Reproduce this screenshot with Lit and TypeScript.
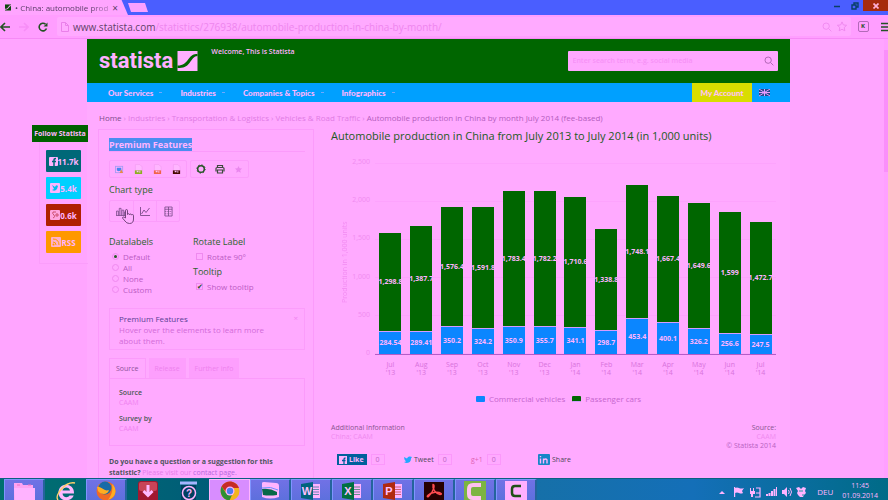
import { LitElement, html, svg, css } from "lit";
import { customElement } from "lit/decorators.js";
import { classMap } from "lit/directives/class-map.js";
import { styleMap } from "lit/directives/style-map.js";

interface Month {
  name: string;
  year: string;
  cars: number;
  commercial: number;
}

const MONTHS: Month[] = [
  { name: "Jul", year: "'13", cars: 1298.8, commercial: 284.54 },
  { name: "Aug", year: "'13", cars: 1387.7, commercial: 289.41 },
  { name: "Sep", year: "'13", cars: 1576.4, commercial: 350.2 },
  { name: "Oct", year: "'13", cars: 1591.8, commercial: 324.2 },
  { name: "Nov", year: "'13", cars: 1783.4, commercial: 350.9 },
  { name: "Dec", year: "'13", cars: 1782.2, commercial: 355.7 },
  { name: "Jan", year: "'14", cars: 1710.6, commercial: 341.1 },
  { name: "Feb", year: "'14", cars: 1338.8, commercial: 298.7 },
  { name: "Mar", year: "'14", cars: 1748.1, commercial: 453.4 },
  { name: "Apr", year: "'14", cars: 1667.4, commercial: 400.1 },
  { name: "May", year: "'14", cars: 1649.6, commercial: 326.2 },
  { name: "Jun", year: "'14", cars: 1599, commercial: 256.6 },
  { name: "Jul", year: "'14", cars: 1472.7, commercial: 247.5 },
];
const AXIS = ["2,500", "2,000", "1,500", "1,000", "500", "0"];
const AXIS_MAX = 2500;

const swoosh = (fg: string, bg: string) => svg`
  <rect width="20" height="20" fill=${fg}></rect>
  <path d="M0 14.500C6 14.500 8 12 11 8S16 3 20 3V5C16.500 5 15 8 12 12S6 17 0 17Z" fill=${bg}></path>`;

const magnifier = html`<svg viewBox="0 0 12 12" width="10" height="10" fill="none" stroke="currentColor">
  <circle cx="5" cy="5" r="3.800"></circle><path d="M8 8L11.200 11.200"></path></svg>`;

@customElement("statista-chart")
export class StatistaChart extends LitElement {
  static styles = css`
    :host { display: block; }
    .title { margin: 0; font-size: 11px; line-height: 14px; font-weight: 400; color: #1d5a1d; white-space: nowrap; }
    .frame { display: grid; grid-template-columns: 20px 24px 1fr; margin-top: 14px; }
    .ytitle { writing-mode: vertical-rl; transform: rotate(180deg); font-size: 7px; line-height: 12px;
      color: #f28bf2; text-align: center; height: 191px; white-space: nowrap; align-self: end; justify-self: end; }
    .yaxis { display: flex; flex-direction: column; justify-content: space-between; height: 201px;
      font-size: 7px; line-height: 10px; color: #f08cf0; text-align: right; padding-right: 5px; }
    .plot { display: flex; height: 191px; margin-top: 6px; border-bottom: 1px solid #b45cc8;
      background: repeating-linear-gradient(to bottom, #fda3fd 0 1px, transparent 1px 38px); }
    .col { flex: 1; min-width: 0; display: flex; flex-direction: column; justify-content: flex-end; align-items: center; }
    .seg { width: 22px; display: flex; align-items: center; justify-content: center; overflow: hidden;
      font-size: 7px; line-height: 8px; font-weight: 700; color: #ffb4ff; }
    .cars { background: #006600; border-bottom: 1px solid #d59cff; box-sizing: border-box; }
    .com { background: #0b86ff; }
    .months { grid-column: 3; display: flex; padding-top: 3px; font-size: 7px; line-height: 8px; color: #d873dc; text-align: center; }
    .months span { flex: 1; }
    .legend { display: flex; justify-content: center; gap: 7px; margin: 16px 0 0 10px; font-size: 8px; line-height: 12px; color: #c566cd; }
    .legend span { display: flex; align-items: center; gap: 4px; }
    .legend i { width: 9px; height: 6px; border-radius: 1px; }
  `;

  private height(value: number) {
    return styleMap({ height: `${Math.round((value / AXIS_MAX) * 191)}px` });
  }

  render() {
    return html`
      <h1 class="title">Automobile production in China from July 2013 to July 2014 (in 1,000 units)</h1>
      <div class="frame">
        <div class="ytitle">Production in 1,000 units</div>
        <div class="yaxis">${AXIS.map((a) => html`<span>${a}</span>`)}</div>
        <div class="plot">
          ${MONTHS.map(
            (m) => html`<div class="col">
              <div class="seg cars" style=${this.height(m.cars)}>${m.cars.toLocaleString("en-US")}</div>
              <div class="seg com" style=${this.height(m.commercial)}>${m.commercial}</div>
            </div>`
          )}
        </div>
        <div class="months">${MONTHS.map((m) => html`<span>${m.name}<br />${m.year}</span>`)}</div>
      </div>
      <div class="legend">
        <span><i class="com"></i>Commercial vehicles</span>
        <span><i class="cars"></i>Passenger cars</span>
      </div>
    `;
  }
}

@customElement("feature-panel")
export class FeaturePanel extends LitElement {
  static styles = css`
    :host { display: block; box-sizing: border-box; border: 1px solid #fb9bfb; padding: 9px 8px 0 10px; color: #f084f0; font-size: 8px; line-height: 11px; }
    h2 { margin: 0; font-size: 9px; line-height: 12px; border-bottom: 1px solid #fb9bfb; }
    h2 span { background: #4a8df0; color: #ffb4ff; }
    h3 { margin: 0; font-size: 9px; line-height: 12px; font-weight: 500; color: #2d642d; }
    button { font: inherit; color: inherit; background: none; border: 0; padding: 0; display: flex; align-items: center; justify-content: center; }
    .tools { display: flex; gap: 3px; margin: 8px 0 6px; }
    .group { display: flex; border: 1px solid #fb9dfb; border-radius: 2px; }
    .group button { width: 19px; height: 16px; }
    .types { display: inline-flex; margin: 4px 0 14px; position: relative; }
    .types button { width: 23px; height: 20px; color: #69407a; }
    .types button + button { border-left: 1px solid #fb9dfb; }
    .hand { position: absolute; left: 12px; top: 8px; }
    .options { display: grid; grid-template-columns: 84px 1fr; color: #bb5cc4; }
    .options h3 { margin-bottom: 3px; }
    .options label { display: flex; align-items: center; gap: 4px; height: 11px; white-space: nowrap; }
    .options input { appearance: none; box-sizing: border-box; width: 7px; height: 7px; margin: 0 0 0 3px; border: 1px solid #ef8aef; display: grid; place-items: center; }
    .options input[type="radio"] { border-radius: 50%; }
    .options input[type="radio"]:checked::before { content: ""; width: 3px; height: 3px; border-radius: 50%; background: #245a24; }
    .options input[type="checkbox"]:checked::before { content: "✔"; font: 7px/7px "DejaVu Sans", sans-serif; color: #1d4d1d; }
    .second h3 + label + h3 { margin-top: 4px; }
    .hint { display: flex; justify-content: space-between; border: 1px solid #fb9dfb; margin-top: 13px; padding: 4px 6px 3px 9px; }
    .hint p { margin: 0; color: #d26cd8; }
    .hint h4 { margin: 0; font-size: 8px; font-weight: 500; line-height: 11px; color: #5a3f94; }
    .hint button { height: 8px; }
    .tabs { display: flex; gap: 3px; margin-top: 8px; }
    .tabs button { height: 20px; padding: 0 6px; background: #fd9ffd; color: #ee82ee; font-size: 7px; }
    .tabs .on { background: none; color: #8e5299; border: 1px solid #fb9bfb; border-bottom: 0; }
    .sheet { border: 1px solid #fb9bfb; padding: 9px 9px 5px; }
    .sheet dl { margin: 0; }
    .sheet dt { color: #4c5a55; line-height: 10px; font-weight: 600; font-size: 7px; }
    .sheet dd { margin: 0 0 6px; line-height: 10px; font-size: 7px; }
    .ask { margin: 10px 0 0; line-height: 11px; font-size: 7px; font-weight: 700; color: #4f5560; padding-right: 20px; }
    .ask span, .ask a { font-weight: 400; color: #e57ce8; text-decoration: none; }
    .ask a { color: #b568dc; }
  `;

  private file(color: string) {
    return html`<svg viewBox="0 0 10 12" width="9" height="11">
      <path d="M1.500 .5H6.500L9 3V8H1.500Z" fill="#ffb6ff" stroke="#ee98ee" stroke-width=".6"></path>
      <rect x="1" y="7" width="8" height="4" fill=${color}></rect><path d="M3 7.500h2v1.500h-2zM6 7.500h1v2h-1z" fill="#ffc0ff"></path></svg>`;
  }

  render() {
    return html`
      <h2><span>Premium Features</span></h2>
      <div class="tools">
        <div class="group">
          <button aria-label="Image"><svg viewBox="0 0 10 10" width="9" height="9">
            <rect x=".5" y="1.500" width="8" height="7" fill="#ffb0ff" stroke="#a89cf4"></rect><path d="M2 3h5v3l-3 1-2-1z" fill="#4a86f0"></path><path d="M5 9l2-4 2 4z" fill="#e88a45"></path></svg></button>
          <button aria-label="Spreadsheet">${this.file("#8caf20")}</button>
          <button aria-label="Presentation">${this.file("#f06448")}</button>
          <button aria-label="Document">${this.file("#480800")}</button>
        </div>
        <div class="group">
          <button aria-label="Settings"><svg viewBox="0 0 10 10" width="10" height="10" fill="none" stroke="#245424">
            <circle cx="5" cy="5" r="3.300" stroke-width="1.500"></circle><circle cx="5" cy="5" r="4.200" stroke-dasharray="1.200 2.100"></circle></svg></button>
          <button aria-label="Print"><svg viewBox="0 0 10 10" width="10" height="10" fill="none" stroke="#3d493d">
            <path d="M2.500 3.500V1.500h5v2M1 7.500V4.500q0-1 1-1h6q1 0 1 1v3M2.500 6h5v3h-5z" stroke-width="1.200"></path></svg></button>
          <button aria-label="Favourite"><svg viewBox="0 0 10 10" width="9" height="9">
            <path d="M5 1l1.200 2.700 2.800.3-2.100 1.900.6 2.800L5 7.300 2.500 8.700l.6-2.800L1 4l2.800-.3z" fill="#ea88ee"></path></svg></button>
        </div>
      </div>
      <h3>Chart type</h3>
      <div class="group types">
        <button aria-label="Columns"><svg viewBox="0 0 12 10" width="11" height="9" fill="none" stroke="currentColor" stroke-width=".8">
          <path d="M.5 9.500V4.500h2v5M3.500 9.500v-8h2v8M6.500 9.500v-6h2v6M9.500 9.500v-4h2v4M0 9.500h12"></path></svg></button>
        <button aria-label="Lines"><svg viewBox="0 0 10 10" width="10" height="10" fill="none" stroke="currentColor" stroke-width=".8">
          <path d="M.5 1V9.500H10M1.500 8L4 4 6 6.500 9.500 2"></path></svg></button>
        <button aria-label="Table"><svg viewBox="0 0 10 12" width="9" height="11" fill="none" stroke="currentColor" stroke-width=".8">
          <path d="M1 1h8v10H1zM1 3.500h8M5 1v10"></path><path d="M1 6h8M1 8.500h8" stroke-dasharray="1 1"></path></svg></button>
        <svg class="hand" viewBox="0 0 12 15" width="12" height="15">
          <path d="M3.500 9V1.800q0-1.300 1-1.300t1 1.300V5.500q.2-.8 1-.8t1 1q.2-.7 1-.7t.9 1q.3-.5 1-.5 1.100 0 1.100 1.300V10q0 4.500-4 4.500-3 0-4.500-2.500L.6 9.200q-.3-1 .5-1.200t2.400 1z" fill="#ffadff" stroke="#663b70" stroke-width=".9"></path></svg>
      </div>
      <div class="options">
        <div>
          <h3>Datalabels</h3>
          ${["Default", "All", "None", "Custom"].map(
            (o, i) => html`<label><input type="radio" name="labels" ?checked=${i === 0} />${o}</label>`
          )}
        </div>
        <div class="second">
          <h3>Rotate Label</h3>
          <label><input type="checkbox" />Rotate 90°</label>
          <h3>Tooltip</h3>
          <label><input type="checkbox" checked />Show tooltip</label>
        </div>
      </div>
      <div class="hint">
        <div>
          <h4>Premium Features</h4>
          <p>Hover over the elements to learn more<br />about them.</p>
        </div>
        <button aria-label="Close">×</button>
      </div>
      <div class="tabs">
        <button class="on">Source</button><button>Release</button><button>Further info</button>
      </div>
      <div class="sheet">
        <dl><dt>Source</dt><dd>CAAM</dd><dt>Survey by</dt><dd>CAAM</dd></dl>
      </div>
      <p class="ask">Do you have a question or a suggestion for this statistic? <span>Please visit our</span> <a href="#contact">contact page.</a></p>
    `;
  }
}

@customElement("task-bar")
export class TaskBar extends LitElement {
  static styles = css`
    :host { display: flex; height: 22px; box-sizing: border-box; border-top: 1px solid #0a6080; overflow: hidden; color: #ffb4ff;
      background: linear-gradient(to right, #007070, #005b78 25%, #1670a8 60%, #146fb8 78%, #006b87); }
    .apps { display: flex; flex: 1; padding-left: 4px; }
    button { width: 41px; height: 24px; border: 0; padding: 0; background: none; display: flex; align-items: center; justify-content: center; }
    button.open { background: linear-gradient(#7171e6, #5b70dc); border: 1px solid #7f94ff; border-right: 2px solid #24649c; }
    button.active { background: #d88dff; border: 1px solid #ffb4ff; }
    .tray { display: flex; align-items: center; gap: 5px; height: 25px; padding-right: 10px; }
    .lang { margin: 0 4px 0 5px; font-size: 8px; }
    .clock { align-self: flex-start; font-size: 7px; line-height: 10px; text-align: center; padding-top: 2px; }
  `;

  private office(letter: string, color: string) {
    return html`<svg viewBox="0 0 20 20" width="20" height="20">
      <rect x="9" y="3" width="10" height="14" fill="#ffb4ff"></rect>
      <path d="M12 6h6M12 8.500h6M12 11h6M12 13.500h6" stroke=${color} stroke-width=".6"></path>
      <path d="M0 3L12 1V19L0 17Z" fill=${color}></path>
      <text x="6" y="14" text-anchor="middle" font-size="11" font-weight="700" fill="#ffc0ff">${letter}</text></svg>`;
  }

  private icon(body: unknown) {
    return html`<svg viewBox="0 0 22 22" width="22" height="22">${body}</svg>`;
  }

  render() {
    const apps: [string, string, unknown][] = [
      ["Files", "open", this.icon(svg`<path d="M1 3h8l1 2h10v17H1z" fill="#ffa3f2"></path><path d="M1 8h21v14H2z" fill="#ffb3ff"></path><path d="M4 5h3M15 5h3" stroke="#ee6fbe"></path>`)],
      ["Internet Explorer", "", this.icon(svg`<path d="M19 13.500H7.500C8 18 13 18 14.500 15.500H18.700C16 22.500 3.500 22 3.500 12.500 3.500 2 19.500 2 19 13.500zM7.500 10.500H15C14.500 6.500 8 6.500 7.500 10.500z" fill="#ffb9ff"></path><path d="M3 20C-1 15 11 1 20 3" fill="none" stroke="#ffd06a" stroke-width="1.500"></path>`)],
      ["Firefox", "open", this.icon(svg`<circle cx="11" cy="11" r="9.500" fill="#f06a24"></circle><circle cx="10" cy="8" r="6.500" fill="#176ba7"></circle><path d="M2 7c3-1 5 2 8 3 2 1 4 0 4 0-1 5-8 5-11 1zM17 4c6 5 4 14-4 16 4-5 5-10 4-16z" fill="#ffad20"></path>`)],
      ["Downloads", "", this.icon(svg`<rect x="1" y="1" width="20" height="22" rx="3" fill="#a01830"></rect><rect x="2" y="2" width="18" height="9" rx="2" fill="#c84458"></rect><path d="M11 5v10M6.500 11l4.500 4.500 4.500-4.500" fill="none" stroke="#ffb9ff" stroke-width="3"></path>`)],
      ["Help", "", this.icon(svg`<path d="M2 3h17" stroke="#a5b5ff" stroke-width="3"></path><rect x="3" y="5" width="15" height="17" fill="#004060"></rect><circle cx="11" cy="13" r="6.500" fill="none" stroke="#ffb4ff" stroke-width="1.500"></circle><text x="11" y="17" text-anchor="middle" font-size="10" font-weight="700" fill="#ffb4ff">?</text>`)],
      ["Chrome", "open active", this.icon(svg`<circle cx="11" cy="11" r="9.500" fill="#f3b51e"></circle><path d="M2.500 6.500C7-1 17 0 20 8H11L7 12z" fill="#c62a28"></path><path d="M2.500 6.500C0 12 3 20 10.500 20.500L13 15 7 13z" fill="#2f8f36"></path><circle cx="11" cy="11" r="4.500" fill="#ffb4ff"></circle><circle cx="11" cy="11" r="3.200" fill="#4a7cf0"></circle>`)],
      ["Photos", "open", this.icon(svg`<path d="M3 3q0-1 2-1l12 1q3 0 3 3v11q-9 3-17 0z" fill="#ffb4ff"></path><path d="M3 9q8-1 15 3v3q-8 1-14 0z" fill="#086848"></path><path d="M3 8q9-2 16 2" stroke="#6d94ff" fill="none"></path>`)],
      ["Word", "open", this.office("W", "#00647c")],
      ["Excel", "open", this.office("X", "#007040")],
      ["PowerPoint", "open", this.office("P", "#b02a10")],
      ["Reader", "open", this.icon(svg`<rect x="1" y="2" width="20" height="20" fill="#260000"></rect><path d="M10 4.500C12 4 11.500 11 5.500 16.500 2.500 18 5 13 12 12.300 18 11.800 20 14.500 17 14.500 13 14 9 8.500 10 4.500z" fill="none" stroke="#ff4c50" stroke-width="1.400"></path>`)],
      ["Recorder", "open", this.icon(svg`<rect x="0" y="1" width="22" height="22" fill="#7cb442"></rect><path d="M17 5H9q-4 0-4 4v5q0 4 4 4h8" fill="none" stroke="#ffc0f0" stroke-width="4"></path>`)],
      ["Camtasia", "open", this.icon(svg`<rect x="0" y="1" width="22" height="22" fill="#ffb0ff"></rect><path d="M16 6H10q-3 0-3 3v4q0 3 3 3h6" fill="none" stroke="#205018" stroke-width="2.500"></path>`)],
    ];
    return html`
      <div class="apps">
        ${apps.map(([name, cls, art]) => html`<button aria-label=${name} class=${classMap({ open: cls.includes("open"), active: cls.includes("active") })}>${art}</button>`)}
      </div>
      <div class="tray">
        <svg viewBox="0 0 88 12" width="88" height="12" fill="#ffb4ff" stroke="none">
          <path d="M0 8L3 5L6 8Z"></path>
          <g transform="translate(2 0)"><path d="M13 1h1.200v10H13zM14 2q2-1 4 0t5 0L21 5l1 2q-2 1-4 0t-4 0z"></path></g>
          <g transform="translate(2 0)"><path d="M29 2h1v3h2v-3h1v3h1v3h-2v3h-2V8h-1z"></path><path d="M35 2h4v9h-5M35 7h4" fill="none" stroke="#ffb4ff" stroke-width="1.200"></path></g>
          <g transform="translate(1 0)"><path d="M46 10V8h2v2zM48.500 10V7h2v3zM51 10V5h2v5zM53.500 10V3h2v7zM56 10V1h1v9z"></path></g>
          <g transform="translate(1 0)"><path d="M62 4h2l3-3v10l-3-3h-2z"></path><path d="M68.500 4q1.500 2 0 4M70 2q3 4 0 8" fill="none" stroke="#ffb4ff"></path></g>
          <g transform="translate(3 0)"><path d="M74 2l3-1 2 2 2-2 3 1-1 3 1 2-2 2-1 2h-3l-2-2-1-2 1-2z"></path><path d="M77 5h4M80 9h2" stroke="#259aa0"></path></g>
        </svg>
        <span class="lang">DEU</span>
        <div class="clock">11:45<br />01.09.2014</div>
      </div>
    `;
  }
}

@customElement("app-root")
export class AppRoot extends LitElement {
  static styles = css`
    :host { display: flex; flex-direction: column; height: 100vh; overflow: hidden; background: #ffa5ff; font-family: "Open Sans", "Noto Sans", sans-serif; }
    a { color: inherit; text-decoration: none; }
    button { font: inherit; color: inherit; border: 0; background: none; padding: 0; }
    .tabstrip { display: flex; flex: none; height: 15px; background: #4a5eff; }
    .tab { width: 128px; height: 15px; box-sizing: border-box; padding: 0 10px 0 5px; display: flex; align-items: center; gap: 4px; background: #ffa5ff; font-size: 8px; color: #5b3d68; clip-path: polygon(0 0, 95% 0, 100% 100%, 0 100%); }
    .tab span { flex: 1; white-space: nowrap; line-height: 12px; mask-image: linear-gradient(to right, #000 80%, #0006); }
    .tab button { font-size: 10px; line-height: 12px; color: #5b3d68; }
    .new { width: 20px; height: 9px; margin: 3px 0 0; background: #f9a0ff; clip-path: polygon(0 0, 85% 0, 100% 100%, 15% 100%); }
    .controls { display: flex; margin-left: auto; color: #083f66; }
    .controls button { width: 17px; height: 11px; display: flex; align-items: center; justify-content: center; }
    .controls .close { width: 25px; background: #a62a0c; color: #ffb0d8; }
    .toolbar { display: flex; flex: none; align-items: center; height: 24px; box-sizing: border-box; background: #ff9eff; border-bottom: 1px solid #f68af6; color: #245224; }
    .toolbar button { width: 19px; display: flex; }
    .address { flex: 1; display: flex; align-items: center; gap: 4px; height: 19px; background: #ffaaff; border-radius: 2px; padding: 0 3px 0 4px; color: #ee86ee; }
    .address p { flex: 1; margin: 0; font-size: 10px; line-height: 18px; white-space: nowrap; }
    .address b { font-weight: 400; color: #5f4169; }
    .key { margin: 0 12px 0 7px; border: 1px solid #b26ab8; border-radius: 2px; width: 9px; height: 9px; font-size: 6px; line-height: 8px; font-weight: 700; text-indent: 2px; }
    .toolbar .menu { width: 7px; overflow: hidden; }
    .view { flex: 1; min-height: 0; display: flex; overflow: hidden; }
    .rail { width: 88px; margin-right: -1px; flex: none; padding-top: 86px; display: flex; flex-direction: column; align-items: flex-end; z-index: 1; }
    .follow { background: #006000; color: #ffb4ff; font-size: 7px; line-height: 17px; font-weight: 700; width: 56px; text-align: center; white-space: nowrap; }
    .shares { width: 35px; padding: 8px 7px 10px 6px; display: flex; flex-direction: column; gap: 5px; border-left: 1px solid #fb9dfb; border-bottom: 1px solid #fb9dfb; }
    .shares a { height: 22px; display: flex; align-items: center; justify-content: center; font-size: 8px; font-weight: 700; color: #ffb4ff; border-radius: 1px; }
    .fb { background: #006878; } .tw { background: #00d0ff; } .gp { background: #b02000; } .rss { background: #ff9800; }
    .page { flex: 1; min-width: 0; background: #ffaaff; }
    .head { height: 44px; box-sizing: border-box; display: flex; background: #006600; padding: 0 12px; color: #ffb0ff; }
    .logo { display: flex; align-items: center; gap: 4px; font: 700 22px/44px "Roboto", sans-serif; }
    .head p { margin: 8px 0 0 13px; font-size: 7px; line-height: 10px; font-weight: 600; white-space: nowrap; }
    .search { margin: 12px 0 0 auto; width: 31%; height: 20px; display: flex; align-items: center; background: #ffa8ff; border-radius: 1px; padding: 0 4px; box-sizing: border-box; color: #a45ba8; }
    .search input { flex: 1; min-width: 0; border: 0; padding: 0 1px; background: none; font: 600 7px/18px "Open Sans", sans-serif; outline: 0; }
    .search input::placeholder { color: #f692f6; opacity: 1; }
    nav { display: flex; align-items: center; height: 19px; background: #00a0ff; color: #ffb4ff; font-family: "Lato", sans-serif; font-size: 8px; font-weight: 900; padding-left: 21px; }
    nav .item { display: flex; align-items: center; margin-right: 16px; white-space: nowrap; }
    nav .item::after { content: ""; width: 3px; height: 1px; background: #6ea8ff; margin: 0 2px 0 6px; }
    nav .account { margin-left: auto; width: 60px; height: 19px; background: #d9dd00; color: #ffc4f4; }
    nav .lang { width: 38px; height: 10px; padding-left: 7px; box-sizing: border-box; display: flex; align-items: center; }
    .crumbs { display: flex; gap: 2px; padding: 10px 12px 5px; font-size: 8px; line-height: 12px; color: #e07ce4; white-space: nowrap; }
    .crumbs b { font-weight: 400; color: #804d8b; }
    .crumbs .last { color: #b35dbd; }
    .body { display: flex; padding: 0 14px 0 11px; gap: 17px; }
    feature-panel { width: 216px; flex: none; height: 360px; }
    .main { flex: 1; min-width: 0; }
    .notes { display: flex; justify-content: space-between; margin-top: 18px; font-size: 7px; line-height: 9px; color: #ef8aef; }
    .notes b { font-weight: 500; color: #8a5690; }
    .notes i { font-style: normal; color: #b763bf; }
    .right { text-align: right; }
    .social { display: flex; align-items: center; margin: 4px 0 0 6px; font-size: 7px; color: #4e4757; }
    .social div { display: flex; align-items: center; width: 67px; gap: 4px; }
    .social a { display: flex; align-items: center; gap: 2px; height: 11px; font-weight: 500; }
    .social .like { background: #00609c; color: #ffb4ff; padding: 0 3px 0 2px; font-weight: 700; }
    .social span { border: 1px solid #fb98fb; padding: 0 4px; line-height: 9px; color: #bc67c4; }
    .social .plus { color: #df62b4; }
    .scroll { width: 4px; flex: none; margin-left: 94px; background: #ffa0ff; padding-top: 11px; }
    .scroll div { height: 122px; background: #fa8ffa; }
  `;

  render() {
    return html`
      <div class="tabstrip">
        <div class="tab">
          <svg viewBox="0 0 20 20" width="10" height="9">${swoosh("#0c480c", "#ffa5ff")}</svg>
          <span>• China: automobile prod</span><button aria-label="Close tab">×</button>
        </div>
        <button class="new" aria-label="New tab"></button>
        <div class="controls">
          <button aria-label="Minimize"><svg width="7" height="7"><path d="M0 4.500h6" stroke="currentColor" stroke-width="1.500"></path></svg></button>
          <button aria-label="Restore"><svg width="8" height="8" fill="none" stroke="currentColor" stroke-width="1.400"><path d="M1 3h4v4h-4zM3 3V1h4v4H5"></path></svg></button>
          <button class="close" aria-label="Close"><svg width="6" height="6" stroke="currentColor" stroke-width="1.700"><path d="M.5 .5l5 5M5.500 .5l-5 5"></path></svg></button>
        </div>
      </div>
      <div class="toolbar">
        <button aria-label="Back"><svg width="10" height="10" fill="none" stroke="currentColor" stroke-width="1.600"><path d="M10 5H1.500M5 1L1 5l4 4"></path></svg></button>
        <button aria-label="Forward"><svg width="10" height="10" fill="none" stroke="#f78ef7" stroke-width="1.600"><path d="M0 5h8.500M5 1l4 4-4 4"></path></svg></button>
        <button aria-label="Reload"><svg width="10" height="10" fill="none" stroke="currentColor" stroke-width="1.600"><path d="M8.500 6.500A3.800 3.800 0 1 1 7.500 2.200"></path><path d="M9.500 .5V4.500H5.500z" fill="currentColor" stroke="none"></path></svg></button>
        <div class="address">
          <svg width="8" height="10" fill="none" stroke="#ea80ea"><path d="M.5 .5h4l3 3v6h-7zM4.500 .5v3h3"></path></svg>
          <p><b>www.statista.com</b>/statistics/276938/automobile-production-in-china-by-month/</p>
          ${magnifier}
          <svg width="12" height="11" viewBox="0 0 12 12" fill="none" stroke="currentColor"><path d="M6 1l1.500 3.300 3.500.4-2.600 2.400.7 3.600L6 9 2.900 10.700l.7-3.600L1 4.700l3.500-.4z"></path></svg>
        </div>
        <div class="key">K</div>
        <button class="menu" aria-label="Menu"><svg width="12" height="10" stroke="currentColor" stroke-width="1.300"><path d="M0 1.500h12M0 5h12M0 8.500h12"></path></svg></button>
      </div>
      <div class="view">
        <aside class="rail">
          <div class="follow">Follow Statista</div>
          <div class="shares">
            <a class="fb" href="#fb"><svg width="9" height="9"><rect width="9" height="9" rx="1" fill="#ffb4ff"></rect><path d="M5 9V3q0-1.500 2-1.500M3 4.500h4" stroke="#006878" stroke-width="1.500" fill="none"></path></svg>11.7k</a>
            <a class="tw" href="#tw"><svg width="10" height="10"><rect width="10" height="10" rx="1" fill="#ffb4ff"></rect><path d="M2 2l3 2q1-3 3-1l-1 3q-2 3-5 1l2-1z" fill="#00c0f0"></path></svg>5.4k</a>
            <a class="gp" href="#gp"><svg width="10" height="10"><rect width="10" height="10" rx="1" fill="#ffa4df"></rect><path d="M6 2H3q-1 2 1 3 2 2-1 3M7 3v4M5 5h4" stroke="#cc5070" fill="none"></path></svg>0.6k</a>
            <a class="rss" href="#rss"><svg width="10" height="10"><rect width="10" height="10" rx="1" fill="#ffb0cc"></rect><path d="M2 2q6 0 6 6M2 5q3 0 3 3" stroke="#ff9800" fill="none"></path><circle cx="2.500" cy="7.500" r="1" fill="#ff9800"></circle></svg>RSS</a>
          </div>
        </aside>
        <div class="page">
          <header class="head">
            <a class="logo" href="#home">statista<svg viewBox="0 0 20 20" width="21" height="20">${swoosh("#ffb0ff", "#006600")}</svg></a>
            <p>Welcome, This is Statista</p>
            <label class="search"><input aria-label="Search" placeholder="Enter search term, e.g. social media" />${magnifier}</label>
          </header>
          <nav>
            ${["Our Services", "Industries", "Companies & Topics", "Infographics"].map((t) => html`<a class="item" href="#nav">${t}</a>`)}
            <button class="account">My Account</button>
            <a class="lang" href="#lang" aria-label="Language"><svg width="11" height="8"><rect width="11" height="7" rx="1" fill="#244a8c"></rect><path d="M0 0l11 7M11 0L0 7M5.500 0v7M0 3.500h11" stroke="#e79bff"></path></svg></a>
          </nav>
          <div class="crumbs">
            <b>Home</b><span>›</span><a href="#i">Industries</a><span>›</span><a href="#t">Transportation &amp; Logistics</a><span>›</span><a href="#v">Vehicles &amp; Road Traffic</a><span>›</span><span class="last">Automobile production in China by month July 2014 (fee-based)</span>
          </div>
          <div class="body">
            <feature-panel></feature-panel>
            <div class="main">
              <statista-chart></statista-chart>
              <div class="notes">
                <div><b>Additional Information</b><br />China; CAAM</div>
                <div class="right"><b>Source:</b><br />CAAM<br /><i>© Statista 2014</i></div>
              </div>
              <div class="social">
                <div><a class="like" href="#like"><svg width="8" height="8"><rect width="8" height="8" fill="#ffb4ff"></rect><path d="M5 8V3q0-1 1.500-1M3 4.500h3.500" stroke="#00609c" fill="none" stroke-width="1.300"></path></svg>Like</a><span>0</span></div>
                <div><a href="#tweet"><svg width="8" height="7"><path d="M0 1l3 1.500Q4 0 6 .5l2 .5-1 1.500Q7 7 2 7L0 6l2-.5L.5 3.500z" fill="#20a8ff"></path></svg>Tweet</a><span>0</span></div>
                <div><a class="plus" href="#plus">g+1</a><span>0</span></div>
                <div><a href="#share"><svg width="12" height="11"><rect width="12" height="11" rx="1" fill="#1686c8"></rect><path d="M2.500 4.500v5M2.500 2v1.200M5.500 9.500v-5M5.500 6q3-2 3.500 0v3.500" stroke="#ffb4ff" stroke-width="1.400" fill="none"></path></svg>Share</a></div>
              </div>
            </div>
          </div>
        </div>
        <div class="scroll"><div></div></div>
      </div>
      <task-bar></task-bar>
    `;
  }
}
